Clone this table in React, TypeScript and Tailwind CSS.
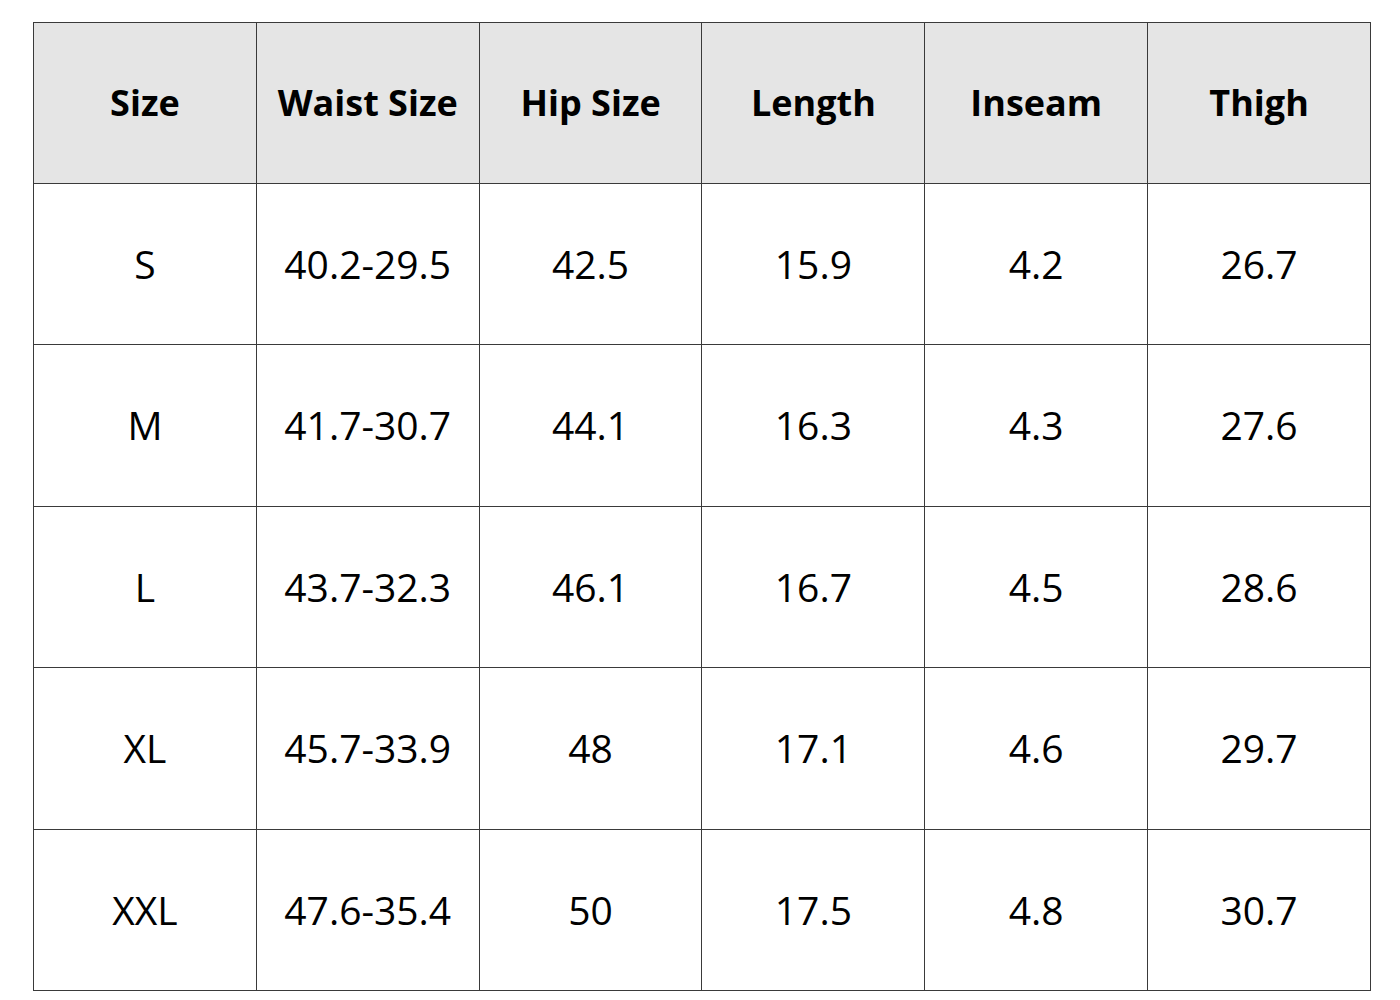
const headers = ['Size', 'Waist Size', 'Hip Size', 'Length', 'Inseam', 'Thigh'];

const rows = [
  ['S', '40.2-29.5', '42.5', '15.9', '4.2', '26.7'],
  ['M', '41.7-30.7', '44.1', '16.3', '4.3', '27.6'],
  ['L', '43.7-32.3', '46.1', '16.7', '4.5', '28.6'],
  ['XL', '45.7-33.9', '48', '17.1', '4.6', '29.7'],
  ['XXL', '47.6-35.4', '50', '17.5', '4.8', '30.7'],
];

export default function App() {
  return (
    <div className="w-[1400px] h-[1000px] bg-white pt-[22px] pl-[33px] font-['Open_Sans',sans-serif] text-black">
      <table className="w-[1338px] h-[969px] border-collapse table-fixed">
        <thead>
          <tr className="h-[161px] bg-[#e5e5e5]">
            {headers.map((h) => (
              <th key={h} className="border-[1.5px] border-[#3a3a3a] text-[36px] font-bold text-center align-middle">
                {h}
              </th>
            ))}
          </tr>
        </thead>
        <tbody>
          {rows.map((row) => (
            <tr key={row[0]} className="h-[161px]">
              {row.map((cell, i) => (
                <td key={i} className="border-[1.5px] border-[#3a3a3a] text-[39px] font-normal text-center align-middle">
                  {cell}
                </td>
              ))}
            </tr>
          ))}
        </tbody>
      </table>
    </div>
  );
}
